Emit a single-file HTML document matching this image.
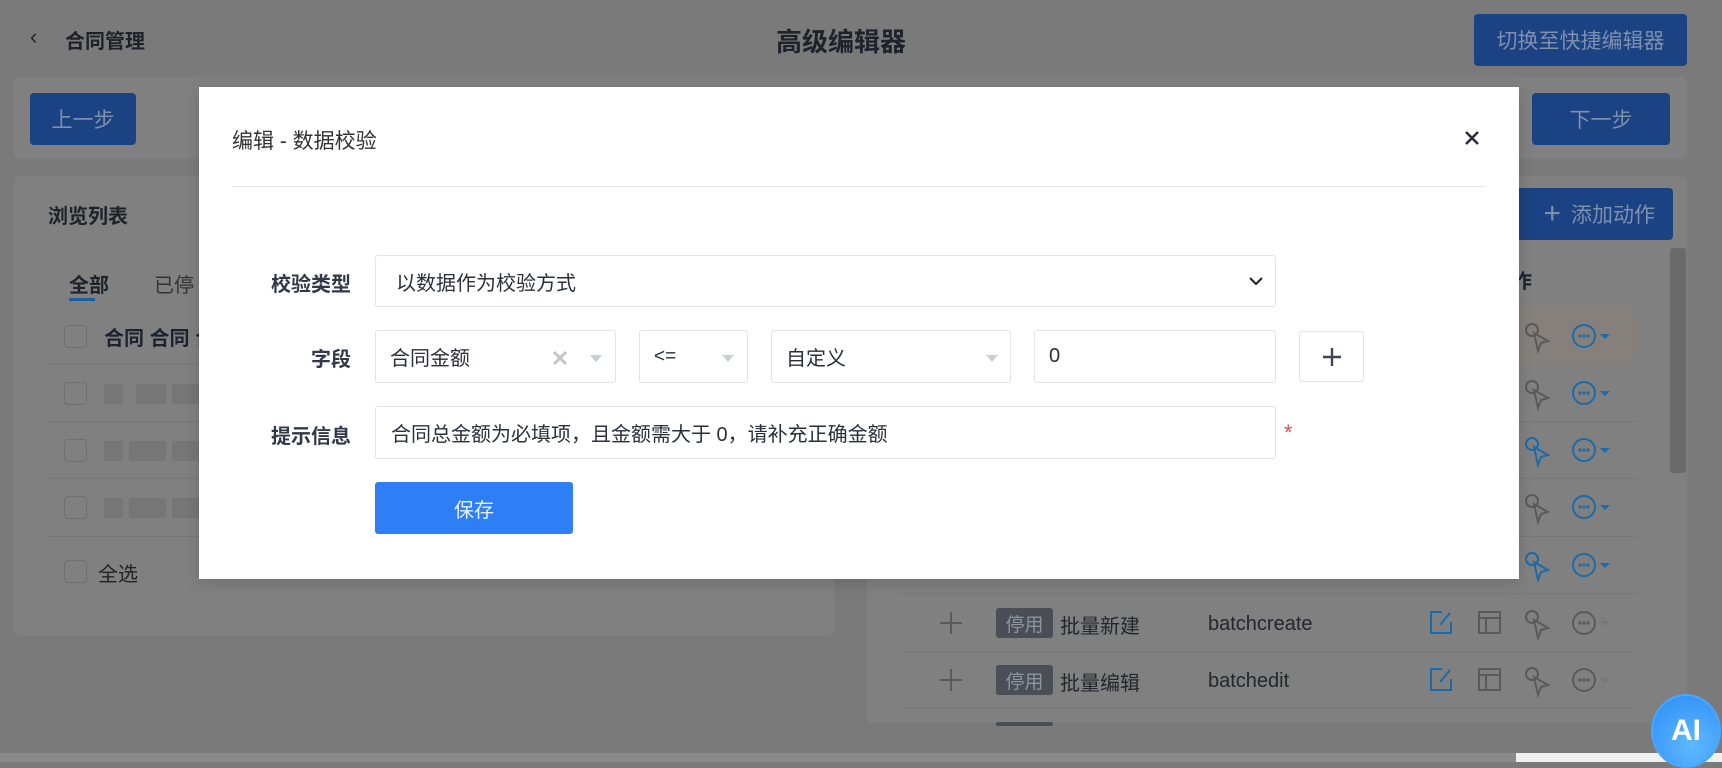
<!DOCTYPE html>
<html><head><meta charset="utf-8"><style>
*{box-sizing:border-box;margin:0;padding:0}
body{width:1722px;height:762px;overflow:hidden;position:relative;background:#7a7a7a;font-family:"Liberation Sans","Noto Sans CJK SC",sans-serif;color:#1c2230}
.a{position:absolute}
.btnd{background:#1b4282;color:#7f8fae;border-radius:4px;font-size:21px;display:flex;align-items:center;justify-content:center}
.panel{background:#808080;border-radius:6px}
.box{position:absolute;background:#fff;border:1px solid #e2e4e8;border-radius:3px;font-size:20px;color:#2a2f3a;display:flex;align-items:center;padding-left:17px}
.lbl{position:absolute;font-size:20px;font-weight:bold;color:#30384a;text-align:right;width:200px;left:151px}
.caret{position:absolute;width:0;height:0;border-left:6px solid transparent;border-right:6px solid transparent;border-top:7px solid #c9cdd4}
.cb{position:absolute;left:64px;width:23px;height:23px;border:1px solid #6f6f6f;border-radius:4px}
.sep{position:absolute;height:1px;background:#777}
.blk{position:absolute;height:20px;background:#767676}
.tag{position:absolute;left:996px;width:57px;height:30px;background:#4a4e57;color:#8f949c;border-radius:3px;font-size:19px;display:flex;align-items:center;justify-content:center}
.t{position:absolute;font-size:20px;color:#23262d}
</style></head><body>
<div class="a" style="left:30px;top:24px;font-size:22px;color:#222">‹</div>
<div class="a" style="left:65px;top:25px;font-size:20px;font-weight:bold;color:#1e222b">合同管理</div>
<div class="a" style="left:776px;top:22px;font-size:26px;font-weight:bold;color:#1e222b">高级编辑器</div>
<div class="a btnd" style="left:1474px;top:14px;width:213px;height:52px">切换至快捷编辑器</div>
<div class="a panel" style="left:14px;top:77px;width:1673px;height:82px"></div>
<div class="a btnd" style="left:30px;top:93px;width:106px;height:52px">上一步</div>
<div class="a btnd" style="left:1532px;top:93px;width:138px;height:52px">下一步</div>
<div class="a panel" style="left:14px;top:176px;width:820px;height:460px"></div>
<div class="a" style="left:48px;top:200px;font-size:20px;font-weight:bold;color:#1e222b">浏览列表</div>
<div class="a" style="left:69px;top:269px;font-size:20px;font-weight:bold;color:#1e222b">全部</div>
<div class="a" style="left:69px;top:298px;width:26px;height:3px;background:#1a5f9e"></div>
<div class="a" style="left:154px;top:269px;font-size:20px;color:#333">已停</div>
<div class="cb" style="top:325px"></div><div class="a" style="left:104px;top:322px;font-size:20px;font-weight:bold">合同 合同 合</div>
<div class="sep" style="left:48px;top:364px;width:786px"></div>
<div class="cb" style="top:382px"></div><div class="blk" style="left:104px;top:384px;width:19px"></div><div class="blk" style="left:136px;top:384px;width:30px"></div><div class="blk" style="left:172px;top:384px;width:30px"></div>
<div class="sep" style="left:48px;top:421px;width:786px"></div>
<div class="cb" style="top:439px"></div><div class="blk" style="left:104px;top:441px;width:19px"></div><div class="blk" style="left:129px;top:441px;width:37px"></div><div class="blk" style="left:172px;top:441px;width:30px"></div>
<div class="sep" style="left:48px;top:478px;width:786px"></div>
<div class="cb" style="top:496px"></div><div class="blk" style="left:104px;top:498px;width:19px"></div><div class="blk" style="left:129px;top:498px;width:37px"></div><div class="blk" style="left:172px;top:498px;width:30px"></div>
<div class="sep" style="left:48px;top:536px;width:786px"></div>
<div class="cb" style="top:560px"></div><div class="a" style="left:98px;top:558px;font-size:20px;color:#222">全选</div>
<div class="a panel" style="left:867px;top:176px;width:820px;height:547px"></div>
<div class="a btnd" style="left:1500px;top:188px;width:173px;height:52px;justify-content:flex-end;padding-right:18px"><span style="font-size:30px;margin-right:10px">+</span>添加动作</div>
<div class="a" style="left:1670px;top:248px;width:16px;height:225px;background:#6a6a6a;border-radius:3px"></div>
<div class="a" style="left:1512px;top:265px;font-size:20px;font-weight:bold">作</div>
<div class="a" style="left:900px;top:305px;width:737px;height:60px;background:#85807c"></div>
<div class="sep" style="left:903px;top:421px;width:734px"></div>
<div class="sep" style="left:903px;top:478px;width:734px"></div>
<div class="sep" style="left:903px;top:536px;width:734px"></div>
<div class="sep" style="left:903px;top:593px;width:734px"></div>
<div class="sep" style="left:903px;top:651px;width:734px"></div>
<div class="sep" style="left:903px;top:708px;width:734px"></div>
<svg class="a" style="left:0;top:0" width="1722" height="762">
<g fill="none" stroke-width="2">
<g stroke="#5a5a5a"><circle cx="1532" cy="330" r="6"/><path d="M1534 333l14 8-7 2-3 8z"/></g>
<g stroke="#1c6aa8"><circle cx="1584" cy="336" r="11"/></g>
<g stroke="#5a5a5a"><circle cx="1532" cy="387" r="6"/><path d="M1534 390l14 8-7 2-3 8z"/></g>
<g stroke="#1c6aa8"><circle cx="1584" cy="393" r="11"/></g>
<g stroke="#1c6aa8"><circle cx="1532" cy="444" r="6"/><path d="M1534 447l14 8-7 2-3 8z"/></g>
<g stroke="#1c6aa8"><circle cx="1584" cy="450" r="11"/></g>
<g stroke="#5a5a5a"><circle cx="1532" cy="501" r="6"/><path d="M1534 504l14 8-7 2-3 8z"/></g>
<g stroke="#1c6aa8"><circle cx="1584" cy="507" r="11"/></g>
<g stroke="#1c6aa8"><circle cx="1532" cy="559" r="6"/><path d="M1534 562l14 8-7 2-3 8z"/></g>
<g stroke="#1c6aa8"><circle cx="1584" cy="565" r="11"/></g>
<g stroke="#5a5a5a">
<path d="M951 612v22M940 623h22"/><path d="M951 669v22M940 680h22"/>
<rect x="1479" y="612" width="21" height="21"/><path d="M1479 618h21M1486 618v15"/>
<rect x="1479" y="669" width="21" height="21"/><path d="M1479 675h21M1486 675v15"/>
<circle cx="1532" cy="617" r="6"/><path d="M1534 620l14 8-7 2-3 8z"/>
<circle cx="1532" cy="674" r="6"/><path d="M1534 677l14 8-7 2-3 8z"/>
<circle cx="1584" cy="623" r="11"/><circle cx="1584" cy="680" r="11"/></g>
<g stroke="#1c6aa8"><path d="M1442 612h-11v21h20v-11M1440 625l10-12"/><path d="M1442 669h-11v21h20v-11M1440 682l10-12"/></g>
</g>
<g fill="#1c6aa8"><circle cx="1580" cy="336" r="1.6"/><circle cx="1584" cy="336" r="1.6"/><circle cx="1588" cy="336" r="1.6"/><circle cx="1580" cy="393" r="1.6"/><circle cx="1584" cy="393" r="1.6"/><circle cx="1588" cy="393" r="1.6"/><circle cx="1580" cy="450" r="1.6"/><circle cx="1584" cy="450" r="1.6"/><circle cx="1588" cy="450" r="1.6"/><circle cx="1580" cy="507" r="1.6"/><circle cx="1584" cy="507" r="1.6"/><circle cx="1588" cy="507" r="1.6"/><circle cx="1580" cy="565" r="1.6"/><circle cx="1584" cy="565" r="1.6"/><circle cx="1588" cy="565" r="1.6"/>
<path d="M1600 334h10l-5 5z M1600 391h10l-5 5z M1600 448h10l-5 5z M1600 505h10l-5 5z M1600 563h10l-5 5z"/></g>
<g fill="#5a5a5a"><circle cx="1580" cy="623" r="1.6"/><circle cx="1584" cy="623" r="1.6"/><circle cx="1588" cy="623" r="1.6"/><circle cx="1580" cy="680" r="1.6"/><circle cx="1584" cy="680" r="1.6"/><circle cx="1588" cy="680" r="1.6"/></g>
<g fill="#777"><path d="M1600 621h10l-5 5z M1600 678h10l-5 5z"/></g>
</svg>
<div class="tag" style="top:608px">停用</div><div class="t" style="left:1060px;top:610px">批量新建</div><div class="t" style="left:1208px;top:613px">batchcreate</div>
<div class="tag" style="top:665px">停用</div><div class="t" style="left:1060px;top:667px">批量编辑</div><div class="t" style="left:1208px;top:670px">batchedit</div>
<div class="tag" style="top:722px;height:4px"></div>
<div class="a" style="left:0;top:753px;width:1722px;height:9px;background:#8a8a8a"></div>
<div class="a" style="left:1516px;top:753px;width:206px;height:9px;background:#f0f0f0"></div>
<div class="a" style="left:1651px;top:694px;width:70px;height:74px;border-radius:50%;background:radial-gradient(circle at 60% 70%,#5fb8ff,#2b8cf5);color:#fff;font-size:30px;font-weight:bold;display:flex;align-items:center;justify-content:center;border:2px solid #4aa6ff">AI</div>
<div class="a" style="left:199px;top:87px;width:1320px;height:492px;background:#fff;box-shadow:0 4px 14px rgba(0,0,0,.15)">
<div class="a" style="left:33px;top:38px;font-size:21px;color:#333">编辑 - 数据校验</div>
<svg class="a" style="left:1266px;top:44px" width="14" height="14"><path d="M1 1l12 12M13 1L1 13" stroke="#2a3040" stroke-width="2.6"/></svg>
<div class="a" style="left:33px;top:99px;width:1254px;height:1px;background:#e6e6e6"></div>
</div>
<div class="lbl" style="top:268px">校验类型</div>
<div class="box" style="left:375px;top:255px;width:901px;height:52px;font-size:20px;padding-left:20px">以数据作为校验方式
<svg class="a" style="right:12px;top:20px" width="14" height="10"><path d="M1 2l6 6 6-6" fill="none" stroke="#222" stroke-width="2"/></svg></div>
<div class="lbl" style="top:343px">字段</div>
<div class="box" style="left:375px;top:330px;width:241px;height:53px;padding-left:14px">合同金额
<svg class="a" style="left:176px;top:19px" width="16" height="16"><path d="M2 2l12 12M14 2L2 14" stroke="#c4c4c4" stroke-width="3"/></svg>
<div class="caret" style="left:214px;top:24px"></div></div>
<div class="box" style="left:639px;top:330px;width:109px;height:53px;padding-left:14px;font-size:19px">&lt;=<div class="caret" style="left:82px;top:24px"></div></div>
<div class="box" style="left:771px;top:330px;width:240px;height:53px;padding-left:14px">自定义<div class="caret" style="left:214px;top:24px"></div></div>
<div class="box" style="left:1034px;top:330px;width:242px;height:53px;padding-left:14px">0</div>
<div class="box" style="left:1299px;top:331px;width:65px;height:51px;padding:0;justify-content:center">
<svg width="20" height="20"><path d="M10 1v18M1 10h18" stroke="#3c4558" stroke-width="2.4"/></svg></div>
<div class="lbl" style="top:420px">提示信息</div>
<div class="box" style="left:375px;top:406px;width:901px;height:53px;padding-left:15px">合同总金额为必填项，且金额需大于 0，请补充正确金额</div>
<div class="a" style="left:1284px;top:420px;color:#f04848;font-size:22px">*</div>
<div class="a" style="left:375px;top:482px;width:198px;height:52px;background:#2e7ff6;border-radius:3px;color:#e6f0ff;font-size:20px;display:flex;align-items:center;justify-content:center">保存</div>
</body></html>
